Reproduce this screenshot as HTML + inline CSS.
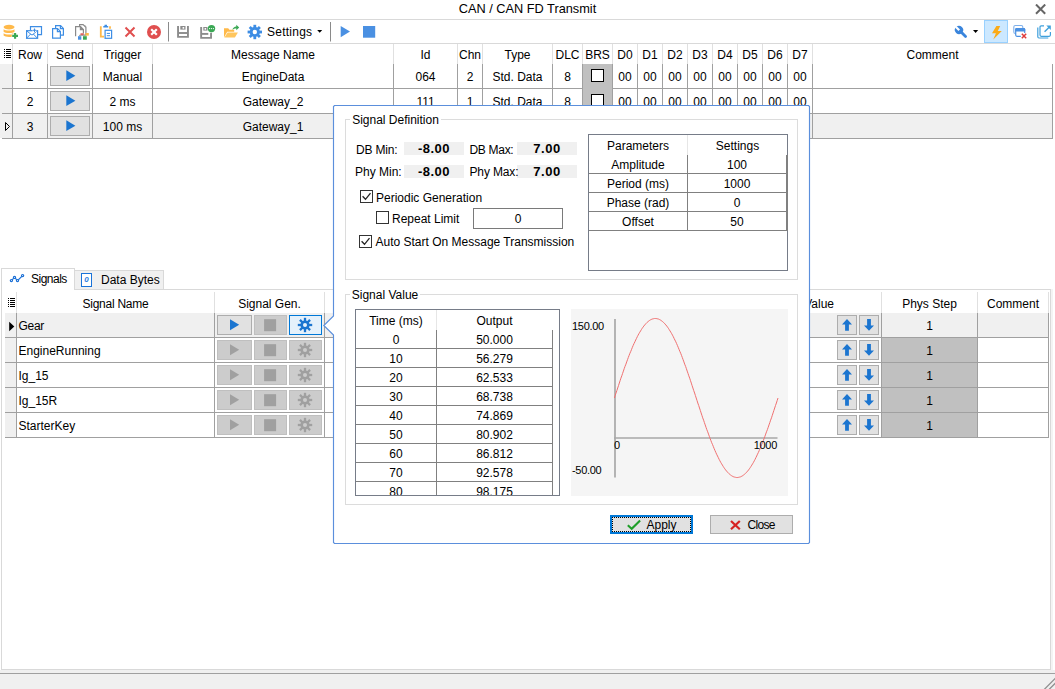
<!DOCTYPE html><html><head><meta charset="utf-8"><title>CAN / CAN FD Transmit</title><style>
html,body{margin:0;padding:0}
body{width:1055px;height:689px;position:relative;overflow:hidden;background:#fff;font-family:"Liberation Sans",sans-serif;font-size:12px;color:#000;line-height:1}
div,span,svg{position:absolute;box-sizing:border-box}
.t{white-space:nowrap;height:14px;line-height:14px}
.c{text-align:center}
.hl{background:#d9d9d9;height:1px}
.vl{background:#e0e0e0;width:1px}
.gl{background:#a0a0a0}
.btn{background:#e1e1e1;border:1px solid #adadad}
.btnd{background:#cccccc;border:1px solid #bfbfbf}
</style></head><body>
<div class="t c" style="left:0px;top:2px;width:1055px;font-size:12.75px">CAN / CAN FD Transmit</div>
<svg style="left:1035px;top:4px" width="11" height="11" viewBox="0 0 11 11"><path d="M1 .5L10.200 9.700M10.200 .5L1 9.700" stroke="#666" stroke-width="2" fill="none"/></svg>
<div style="left:0px;top:19px;width:1055px;height:1px;background:#d9d9d9"></div>
<div style="left:0px;top:43px;width:1055px;height:1px;background:#d9d9d9"></div>
<div class="" style="left:0px;top:670px;width:1055px;height:19px;background:#f0f0f0"></div>
<div style="left:0px;top:673px;width:1055px;height:1px;background:#a0a0a0"></div>
<svg style="left:1041px;top:675px" width="14" height="14" viewBox="1041 675 14 14"><path d="M1044.200 689.500L1055.500 678.200M1049 689.500L1055.500 683" stroke="#909090" stroke-width="1.300" fill="none"/></svg>
<div class="" style="left:1051px;top:289px;width:2px;height:381px;background:#f4f4f4"></div>
<div class="" style="left:0px;top:114px;width:1052px;height:24px;background:#f0f0f0"></div>
<div class="" style="left:0px;top:64px;width:12px;height:74px;background:#f0f0f0"></div>
<div style="left:12px;top:44px;width:1px;height:20px;background:#e0e0e0"></div>
<div class="t c" style="left:13px;top:48px;width:34px;">Row</div>
<div style="left:47px;top:44px;width:1px;height:20px;background:#e0e0e0"></div>
<div class="t c" style="left:48px;top:48px;width:44px;">Send</div>
<div style="left:92px;top:44px;width:1px;height:20px;background:#e0e0e0"></div>
<div class="t c" style="left:93px;top:48px;width:59px;">Trigger</div>
<div style="left:152px;top:44px;width:1px;height:20px;background:#e0e0e0"></div>
<div class="t c" style="left:153px;top:48px;width:240px;">Message Name</div>
<div style="left:393px;top:44px;width:1px;height:20px;background:#e0e0e0"></div>
<div class="t c" style="left:394px;top:48px;width:63px;">Id</div>
<div style="left:457px;top:44px;width:1px;height:20px;background:#e0e0e0"></div>
<div class="t c" style="left:458px;top:48px;width:24px;">Chn</div>
<div style="left:482px;top:44px;width:1px;height:20px;background:#e0e0e0"></div>
<div class="t c" style="left:483px;top:48px;width:69px;">Type</div>
<div style="left:552px;top:44px;width:1px;height:20px;background:#e0e0e0"></div>
<div class="t c" style="left:553px;top:48px;width:29px;">DLC</div>
<div style="left:582px;top:44px;width:1px;height:20px;background:#e0e0e0"></div>
<div class="t c" style="left:583px;top:48px;width:29px;">BRS</div>
<div style="left:612px;top:44px;width:1px;height:20px;background:#e0e0e0"></div>
<div class="t c" style="left:613px;top:48px;width:24px;">D0</div>
<div style="left:637px;top:44px;width:1px;height:20px;background:#e0e0e0"></div>
<div class="t c" style="left:638px;top:48px;width:24px;">D1</div>
<div style="left:662px;top:44px;width:1px;height:20px;background:#e0e0e0"></div>
<div class="t c" style="left:663px;top:48px;width:24px;">D2</div>
<div style="left:687px;top:44px;width:1px;height:20px;background:#e0e0e0"></div>
<div class="t c" style="left:688px;top:48px;width:24px;">D3</div>
<div style="left:712px;top:44px;width:1px;height:20px;background:#e0e0e0"></div>
<div class="t c" style="left:713px;top:48px;width:24px;">D4</div>
<div style="left:737px;top:44px;width:1px;height:20px;background:#e0e0e0"></div>
<div class="t c" style="left:738px;top:48px;width:24px;">D5</div>
<div style="left:762px;top:44px;width:1px;height:20px;background:#e0e0e0"></div>
<div class="t c" style="left:763px;top:48px;width:24px;">D6</div>
<div style="left:787px;top:44px;width:1px;height:20px;background:#e0e0e0"></div>
<div class="t c" style="left:788px;top:48px;width:24px;">D7</div>
<div style="left:812px;top:44px;width:1px;height:20px;background:#e0e0e0"></div>
<div class="t c" style="left:813px;top:48px;width:239px;">Comment</div>
<svg style="left:4px;top:49px" width="8" height="10" viewBox="0 0 8 10"><path d="M0 .5h1M2 .5h5M0 2.5h1M2 2.5h5M0 4.5h1M2 4.5h5M0 6.5h1M2 6.5h5M0 8.5h1M2 8.5h5" stroke="#000" stroke-width="1"/></svg>
<div class="t c" style="left:13px;top:70px;width:34px;">1</div>
<div class="btn" style="left:50px;top:66px;width:40px;height:20px;"></div>
<svg style="left:66px;top:70px" width="10" height="12" viewBox="0 0 10 12"><path d="M.300 .300L9.400 5.650L.300 11Z" fill="#1b75d0"/></svg>
<div class="t c" style="left:93px;top:70px;width:59px;">Manual</div>
<div class="t c" style="left:153px;top:70px;width:240px;">EngineData</div>
<div class="t c" style="left:394px;top:70px;width:63px;">064</div>
<div class="t c" style="left:458px;top:70px;width:24px;">2</div>
<div class="t c" style="left:483px;top:70px;width:69px;">Std. Data</div>
<div class="t c" style="left:553px;top:70px;width:29px;">8</div>
<div class="" style="left:582px;top:64px;width:31px;height:24px;background:#c0c0c0"></div>
<div class="" style="left:591px;top:69px;width:13px;height:13px;background:#fff;border:1px solid #000"></div>
<div class="t c" style="left:613px;top:70px;width:24px;">00</div>
<div class="t c" style="left:638px;top:70px;width:24px;">00</div>
<div class="t c" style="left:663px;top:70px;width:24px;">00</div>
<div class="t c" style="left:688px;top:70px;width:24px;">00</div>
<div class="t c" style="left:713px;top:70px;width:24px;">00</div>
<div class="t c" style="left:738px;top:70px;width:24px;">00</div>
<div class="t c" style="left:763px;top:70px;width:24px;">00</div>
<div class="t c" style="left:788px;top:70px;width:24px;">00</div>
<div style="left:2px;top:88px;width:1051px;height:1px;background:#a0a0a0"></div>
<div class="t c" style="left:13px;top:95px;width:34px;">2</div>
<div class="btn" style="left:50px;top:91px;width:40px;height:20px;"></div>
<svg style="left:66px;top:95px" width="10" height="12" viewBox="0 0 10 12"><path d="M.300 .300L9.400 5.650L.300 11Z" fill="#1b75d0"/></svg>
<div class="t c" style="left:93px;top:95px;width:59px;">2 ms</div>
<div class="t c" style="left:153px;top:95px;width:240px;">Gateway_2</div>
<div class="t c" style="left:394px;top:95px;width:63px;">111</div>
<div class="t c" style="left:458px;top:95px;width:24px;">1</div>
<div class="t c" style="left:483px;top:95px;width:69px;">Std. Data</div>
<div class="t c" style="left:553px;top:95px;width:29px;">8</div>
<div class="" style="left:582px;top:88px;width:31px;height:25px;background:#c0c0c0"></div>
<div class="" style="left:591px;top:94px;width:13px;height:13px;background:#fff;border:1px solid #000"></div>
<div class="t c" style="left:613px;top:95px;width:24px;">00</div>
<div class="t c" style="left:638px;top:95px;width:24px;">00</div>
<div class="t c" style="left:663px;top:95px;width:24px;">00</div>
<div class="t c" style="left:688px;top:95px;width:24px;">00</div>
<div class="t c" style="left:713px;top:95px;width:24px;">00</div>
<div class="t c" style="left:738px;top:95px;width:24px;">00</div>
<div class="t c" style="left:763px;top:95px;width:24px;">00</div>
<div class="t c" style="left:788px;top:95px;width:24px;">00</div>
<div style="left:2px;top:113px;width:1051px;height:1px;background:#a0a0a0"></div>
<div class="t c" style="left:13px;top:120px;width:34px;">3</div>
<div class="btn" style="left:50px;top:116px;width:40px;height:20px;"></div>
<svg style="left:66px;top:120px" width="10" height="12" viewBox="0 0 10 12"><path d="M.300 .300L9.400 5.650L.300 11Z" fill="#1b75d0"/></svg>
<div class="t c" style="left:93px;top:120px;width:59px;">100 ms</div>
<div class="t c" style="left:153px;top:120px;width:240px;">Gateway_1</div>
<div class="t c" style="left:394px;top:120px;width:63px;"></div>
<div class="t c" style="left:458px;top:120px;width:24px;"></div>
<div class="t c" style="left:483px;top:120px;width:69px;"></div>
<div class="t c" style="left:553px;top:120px;width:29px;"></div>
<div style="left:2px;top:138px;width:1051px;height:1px;background:#a0a0a0"></div>
<div style="left:12px;top:64px;width:1px;height:74px;background:#a0a0a0"></div>
<div style="left:47px;top:64px;width:1px;height:74px;background:#a0a0a0"></div>
<div style="left:92px;top:64px;width:1px;height:74px;background:#a0a0a0"></div>
<div style="left:152px;top:64px;width:1px;height:74px;background:#a0a0a0"></div>
<div style="left:393px;top:64px;width:1px;height:74px;background:#a0a0a0"></div>
<div style="left:457px;top:64px;width:1px;height:74px;background:#a0a0a0"></div>
<div style="left:482px;top:64px;width:1px;height:74px;background:#a0a0a0"></div>
<div style="left:552px;top:64px;width:1px;height:74px;background:#a0a0a0"></div>
<div style="left:582px;top:64px;width:1px;height:74px;background:#a0a0a0"></div>
<div style="left:612px;top:64px;width:1px;height:74px;background:#a0a0a0"></div>
<div style="left:637px;top:64px;width:1px;height:74px;background:#a0a0a0"></div>
<div style="left:662px;top:64px;width:1px;height:74px;background:#a0a0a0"></div>
<div style="left:687px;top:64px;width:1px;height:74px;background:#a0a0a0"></div>
<div style="left:712px;top:64px;width:1px;height:74px;background:#a0a0a0"></div>
<div style="left:737px;top:64px;width:1px;height:74px;background:#a0a0a0"></div>
<div style="left:762px;top:64px;width:1px;height:74px;background:#a0a0a0"></div>
<div style="left:787px;top:64px;width:1px;height:74px;background:#a0a0a0"></div>
<div style="left:812px;top:64px;width:1px;height:74px;background:#a0a0a0"></div>
<div style="left:1052px;top:64px;width:1px;height:74px;background:#a0a0a0"></div>
<svg style="left:5px;top:122px" width="6" height="9" viewBox="0 0 6 9"><path d="M.5 .5L4.5 4.5L.5 8.5Z" fill="none" stroke="#000" stroke-width="1"/></svg><svg style="left:0;top:0" width="400" height="44" viewBox="0 0 400 44"><g fill="#ffb949"><ellipse cx="9.050" cy="27.100" rx="5.450" ry="2.400"/><path d="M3.600 29.300c1.200 1.700 9.700 1.700 10.900 0v2.400c-1.200 1.800-9.700 1.800-10.900 0z"/><path d="M3.600 33.200c1.200 1.700 9.700 1.700 10.900 0v.2h-2.700v3.400c-3.200 .5-7.200 .1-8.200-1.200z"/></g><path d="M15.100 33v5.800M12.200 35.900h5.800" stroke="#3aa854" stroke-width="2.100" fill="none"/><g fill="none" stroke="#3d8de4" stroke-width="1.200"><path d="M30.500 30v-3.400h11v8h-3.500"/><rect x="26.600" y="30.700" width="11" height="7.600" fill="#fff"/><path d="M26.600 30.800l5.400 4.300l5.400-4.300M26.600 38.200l4.100-4.200M37.400 38.200l-4.100-4.200" stroke-width="1"/></g><rect x="32.600" y="28.300" width="3.800" height="3.800" fill="#fff"/><path d="M34.500 28.500v3.400M32.800 30.200h3.400" stroke="#3d8de4" stroke-width="1.100" fill="none"/><g fill="#fff" stroke="#3d8de4" stroke-width="1.200"><path d="M55.600 25.600h5l2.800 2.800v6.800h-7.800z"/><path d="M60.400 25.600v3h3" fill="none"/><path d="M52.600 28.600h5l2.800 2.800v6.800h-7.800z"/><path d="M57.400 28.600v3h3" fill="none"/></g><g fill="#fff" stroke="#8a8a8a" stroke-width="1.200"><path d="M79.600 24.600h3.500l2.800 2.800v7.800h-6.300z"/><path d="M75.600 36.200v-9.600h5l2.800 2.800v4" /><path d="M80.400 26.600v3h3" fill="none"/></g><path d="M83.300 24.400l2.900 2.900v-1.200z" fill="#8a8a8a"/><path d="M80.600 26.400l3 3h-3z" fill="#8a8a8a"/><rect x="80.500" y="33.300" width="3.200" height="1.600" fill="#e05858"/><rect x="85.400" y="33" width="3.400" height="2.600" fill="#ffb949"/><rect x="78" y="36.200" width="3.300" height="3.500" fill="#4a90e2"/><rect x="83" y="36.200" width="3.800" height="3.500" fill="#3aa854"/><path d="M100.800 26.200v10.500h3.200" stroke="#ffb949" stroke-width="1.800" fill="none"/><path d="M110 26.200v2.600" stroke="#ffb949" stroke-width="1.800" fill="none"/><path d="M103.300 27.400v-1.500h1.200v-1.100h2.500v1.100h1.200v1.500z" fill="#3d8de4"/><rect x="105.100" y="30.300" width="6.500" height="8" fill="#fff" stroke="#3d8de4" stroke-width="1.200"/><path d="M106.800 33.400h3.200M106.800 35.700h3.200" stroke="#3d8de4" stroke-width="1"/><path d="M125.500 27.500l9 9M134.500 27.500l-9 9" stroke="#e04f4f" stroke-width="2" fill="none"/><circle cx="154" cy="32" r="7" fill="#e04f4f"/><path d="M151.200 29.200l5.600 5.600M156.800 29.200l-5.600 5.600" stroke="#fff" stroke-width="2.200" fill="none"/><path d="M168.500 22v19.500" stroke="#8a8a8a" stroke-width="1"/><g fill="none" stroke="#8c8c8c" stroke-width="1.900"><path d="M178.050 26v10.850h9.900v-10.850"/><path d="M178.800 33h8.600"/></g><rect x="180.300" y="26" width="5.200" height="3.600" fill="#8c8c8c"/><rect x="182.600" y="27" width="1.600" height="1.700" fill="#fff"/><g fill="none" stroke="#8c8c8c" stroke-width="1.900"><path d="M201.150 27v10.850h9.900v-5"/><path d="M201.800 33.900h6.500"/></g><rect x="203.300" y="27" width="4.200" height="3.600" fill="#8c8c8c"/><rect x="204.600" y="28" width="1.500" height="1.700" fill="#fff"/><circle cx="211.500" cy="28.600" r="3.700" fill="#3aa854"/><circle cx="209.600" cy="28.600" r=".6" fill="#fff"/><circle cx="211.500" cy="28.600" r=".6" fill="#fff"/><circle cx="213.400" cy="28.600" r=".6" fill="#fff"/><path d="M224 37.500v-9.300h4.200l1.200 1.500h4.800v2h-7l-3.200 5.800z" fill="#ffb949"/><path d="M227.600 32.600h10.300l-3 4.900h-10.500z" fill="#ffc65e"/><path d="M232.300 29.800c.6-2.200 2.200-3.300 4-3.400v-1.600l2.900 2.700l-2.900 2.700v-1.700c-1.500 0-2.700 .4-4 1.300z" fill="#3aa854"/><g fill="#3d8de4"><circle cx="254.8" cy="32" r="5.1"/><rect x="253.40" y="24.80" width="2.80" height="7.20" transform="rotate(0.0 254.8 32)"/><rect x="253.40" y="24.80" width="2.80" height="7.20" transform="rotate(45.0 254.8 32)"/><rect x="253.40" y="24.80" width="2.80" height="7.20" transform="rotate(90.0 254.8 32)"/><rect x="253.40" y="24.80" width="2.80" height="7.20" transform="rotate(135.0 254.8 32)"/><rect x="253.40" y="24.80" width="2.80" height="7.20" transform="rotate(180.0 254.8 32)"/><rect x="253.40" y="24.80" width="2.80" height="7.20" transform="rotate(225.0 254.8 32)"/><rect x="253.40" y="24.80" width="2.80" height="7.20" transform="rotate(270.0 254.8 32)"/><rect x="253.40" y="24.80" width="2.80" height="7.20" transform="rotate(315.0 254.8 32)"/><circle cx="254.8" cy="32" r="2.2" fill="#fff"/></g><path d="M317.200 30h5l-2.500 2.800z" fill="#000"/><path d="M330.500 22v19.500" stroke="#8a8a8a" stroke-width="1"/><path d="M340.700 26v11.200l9.300-5.600z" fill="#4a90e2"/><rect x="363" y="26" width="12.200" height="11.700" fill="#4a90e2"/></svg>
<div class="t" style="left:267px;top:25px;width:50px;letter-spacing:.25px">Settings</div>
<div style="left:984px;top:20px;width:24px;height:23px;background:#cce8ff;border:1px solid #99d1ff"></div>
<svg style="left:945px;top:0" width="110" height="44" viewBox="945 0 110 44"><g transform="translate(959 30) rotate(-45)" fill="#3a85dc"><circle cx="0" cy="0" r="4.100"/><rect x="-1.400" y="2" width="2.800" height="8.600" rx="1.300"/><rect x="-1.100" y="-4.600" width="2.200" height="4.900" fill="#fff"/></g><path d="M973 30h5.200l-2.600 3.100z" fill="#000"/><path d="M996.400 26h3.800l-2.400 4.900h4l-8.500 8.700l2.600-6.400h-3.900z" fill="#fbab18"/><rect x="1013.800" y="25.500" width="9" height="8" rx="1.500" fill="none" stroke="#7fb0ea" stroke-width="1.100"/><rect x="1015.700" y="28.600" width="9" height="7.700" rx="1.200" fill="#fff" stroke="#4a90e2" stroke-width="1.200"/><path d="M1015.200 31.600v-2.300a1.200 1.200 0 0 1 1.200-1.200h7.600a1.200 1.200 0 0 1 1.200 1.200v2.300z" fill="#4a90e2"/><rect x="1020.800" y="33" width="6" height="6" fill="#fff"/><path d="M1021.800 33.800l4.400 4.400M1026.200 33.800l-4.400 4.400" stroke="#e03a3a" stroke-width="1.500" fill="none"/><g fill="none" stroke="#3fa0dc" stroke-width="1.200"><path d="M1044 25.900h-2.800a1.200 1.200 0 0 0-1.200 1.200v8a1.200 1.200 0 0 0 1.200 1.200h8a1.200 1.200 0 0 0 1.200-1.200v-3"/><path d="M1037.800 27.500v9.300a1.200 1.200 0 0 0 1.200 1.200h9.300"/><path d="M1044.600 31.700l4.800-4.800" stroke-width="1.400"/></g><path d="M1046.300 25.400h4.500v4.500z" fill="#3fa0dc"/></svg><div class="" style="left:1px;top:289px;width:1050px;height:381px;border:1px solid #d9d9d9;background:#fff"></div>
<div class="" style="left:74px;top:270px;width:90px;height:20px;border:1px solid #d9d9d9;background:#f0f0f0"></div>
<div class="" style="left:1px;top:268px;width:74px;height:22px;border:1px solid #d9d9d9;border-bottom:none;background:#fff"></div>
<svg style="left:8px;top:272px" width="18" height="12" viewBox="8 272 18 12"><g fill="#fff" stroke="#1a6fd6" stroke-width="1.200"><path d="M11.400 280.600l3.100-3.200l3 3.200l5.100-5" fill="none"/><circle cx="11.400" cy="280.600" r="1.100"/><circle cx="14.500" cy="277.400" r="1.100"/><circle cx="17.500" cy="280.600" r="1.100"/><circle cx="22.600" cy="275.600" r="1.100"/></g></svg>
<div class="t" style="left:31px;top:272px;width:40px;letter-spacing:-.5px">Signals</div>
<div class="" style="left:81px;top:273px;width:11px;height:14px;border:1px solid #1a73d9;background:#fff"></div>
<div class="t c" style="left:81px;top:273px;width:11px;font-size:8px;color:#2a7de0;font-weight:bold"><i>0</i></div>
<div class="t" style="left:101px;top:273px;width:64px;">Data Bytes</div>
<div class="" style="left:5px;top:313px;width:1044px;height:24px;background:#f0f0f0"></div>
<div class="" style="left:5px;top:313px;width:11px;height:124px;background:#f0f0f0"></div>
<div class="t c" style="left:17px;top:297px;width:197px;letter-spacing:-.25px">Signal Name</div>
<div class="t c" style="left:215px;top:297px;width:109px;">Signal Gen.</div>
<div class="t" style="left:774px;top:297px;width:60px;text-align:right">Phys Value</div>
<div class="t c" style="left:882px;top:297px;width:95px;">Phys Step</div>
<div class="t c" style="left:978px;top:297px;width:70px;">Comment</div>
<div style="left:16px;top:292px;width:1px;height:21px;background:#e0e0e0"></div>
<div style="left:214px;top:292px;width:1px;height:21px;background:#e0e0e0"></div>
<div style="left:324px;top:292px;width:1px;height:21px;background:#e0e0e0"></div>
<div style="left:881px;top:292px;width:1px;height:21px;background:#e0e0e0"></div>
<div style="left:977px;top:292px;width:1px;height:21px;background:#e0e0e0"></div>
<div style="left:1048px;top:292px;width:1px;height:21px;background:#e0e0e0"></div>
<svg style="left:8px;top:298px" width="8" height="10" viewBox="0 0 8 10"><path d="M0 .5h1M2 .5h5M0 2.500h1M2 2.500h5M0 4.500h1M2 4.500h5M0 6.500h1M2 6.500h5M0 8.500h1M2 8.500h5" stroke="#000" stroke-width="1"/></svg>
<div class="t" style="left:18.5px;top:319px;width:190px;letter-spacing:-.3px">Gear</div>
<div class="btn" style="left:217px;top:315px;width:35px;height:20px;"></div>
<div class="btnd" style="left:254px;top:315px;width:33px;height:20px;"></div>
<div class="" style="left:289px;top:315px;width:33px;height:20px;background:#e5f1fb;border:1px solid #0078d7"></div>
<svg style="left:217px;top:313px" width="106" height="24" viewBox="217 0 106 24"><path d="M230 6.300v11l9.200-5.500z" fill="#1b75d0"/><rect x="264.100" y="6.200" width="12" height="12" fill="#a0a0a0"/><g fill="#1b75d0"><circle cx="305" cy="12" r="4.6"/><rect x="303.85" y="4.80" width="2.30" height="7.20" transform="rotate(0.0 305 12)"/><rect x="303.85" y="4.80" width="2.30" height="7.20" transform="rotate(45.0 305 12)"/><rect x="303.85" y="4.80" width="2.30" height="7.20" transform="rotate(90.0 305 12)"/><rect x="303.85" y="4.80" width="2.30" height="7.20" transform="rotate(135.0 305 12)"/><rect x="303.85" y="4.80" width="2.30" height="7.20" transform="rotate(180.0 305 12)"/><rect x="303.85" y="4.80" width="2.30" height="7.20" transform="rotate(225.0 305 12)"/><rect x="303.85" y="4.80" width="2.30" height="7.20" transform="rotate(270.0 305 12)"/><rect x="303.85" y="4.80" width="2.30" height="7.20" transform="rotate(315.0 305 12)"/><circle cx="305" cy="12" r="2" fill="#e5f1fb"/></g></svg>
<div class="btn" style="left:837px;top:315px;width:20px;height:20px;"></div>
<div class="btn" style="left:859px;top:315px;width:20px;height:20px;"></div>
<svg style="left:837px;top:313px" width="42" height="24" viewBox="837 0 42 24"><path d="M847 6l5 5.400h-3.100v6.400h-3.800v-6.400h-3.100z" fill="#1b75d0"/><path d="M869 17.800l-5-5.400h3.100v-6.400h3.800v6.400h3.100z" fill="#1b75d0"/></svg>
<div class="t c" style="left:882px;top:319px;width:95px;">1</div>
<div style="left:5px;top:337px;width:1044px;height:1px;background:#a0a0a0"></div>
<div class="t" style="left:18.5px;top:344px;width:190px;">EngineRunning</div>
<div class="btnd" style="left:217px;top:340px;width:35px;height:20px;"></div>
<div class="btnd" style="left:254px;top:340px;width:33px;height:20px;"></div>
<div class="btnd" style="left:289px;top:340px;width:33px;height:20px;"></div>
<svg style="left:217px;top:338px" width="106" height="24" viewBox="217 0 106 24"><path d="M230 6.300v11l9.200-5.500z" fill="#a0a0a0"/><rect x="264.100" y="6.200" width="12" height="12" fill="#a0a0a0"/><g fill="#a0a0a0"><circle cx="305" cy="12" r="4.6"/><rect x="303.85" y="4.80" width="2.30" height="7.20" transform="rotate(0.0 305 12)"/><rect x="303.85" y="4.80" width="2.30" height="7.20" transform="rotate(45.0 305 12)"/><rect x="303.85" y="4.80" width="2.30" height="7.20" transform="rotate(90.0 305 12)"/><rect x="303.85" y="4.80" width="2.30" height="7.20" transform="rotate(135.0 305 12)"/><rect x="303.85" y="4.80" width="2.30" height="7.20" transform="rotate(180.0 305 12)"/><rect x="303.85" y="4.80" width="2.30" height="7.20" transform="rotate(225.0 305 12)"/><rect x="303.85" y="4.80" width="2.30" height="7.20" transform="rotate(270.0 305 12)"/><rect x="303.85" y="4.80" width="2.30" height="7.20" transform="rotate(315.0 305 12)"/><circle cx="305" cy="12" r="2" fill="#cccccc"/></g></svg>
<div class="btn" style="left:837px;top:340px;width:20px;height:20px;"></div>
<div class="btn" style="left:859px;top:340px;width:20px;height:20px;"></div>
<svg style="left:837px;top:338px" width="42" height="24" viewBox="837 0 42 24"><path d="M847 6l5 5.400h-3.100v6.400h-3.800v-6.400h-3.100z" fill="#1b75d0"/><path d="M869 17.800l-5-5.400h3.100v-6.400h3.800v6.400h3.100z" fill="#1b75d0"/></svg>
<div class="" style="left:882px;top:338px;width:95px;height:24px;background:#c0c0c0"></div>
<div class="t c" style="left:882px;top:344px;width:95px;">1</div>
<div style="left:5px;top:362px;width:1044px;height:1px;background:#a0a0a0"></div>
<div class="t" style="left:18.5px;top:369px;width:190px;">Ig_15</div>
<div class="btnd" style="left:217px;top:365px;width:35px;height:20px;"></div>
<div class="btnd" style="left:254px;top:365px;width:33px;height:20px;"></div>
<div class="btnd" style="left:289px;top:365px;width:33px;height:20px;"></div>
<svg style="left:217px;top:363px" width="106" height="24" viewBox="217 0 106 24"><path d="M230 6.300v11l9.200-5.500z" fill="#a0a0a0"/><rect x="264.100" y="6.200" width="12" height="12" fill="#a0a0a0"/><g fill="#a0a0a0"><circle cx="305" cy="12" r="4.6"/><rect x="303.85" y="4.80" width="2.30" height="7.20" transform="rotate(0.0 305 12)"/><rect x="303.85" y="4.80" width="2.30" height="7.20" transform="rotate(45.0 305 12)"/><rect x="303.85" y="4.80" width="2.30" height="7.20" transform="rotate(90.0 305 12)"/><rect x="303.85" y="4.80" width="2.30" height="7.20" transform="rotate(135.0 305 12)"/><rect x="303.85" y="4.80" width="2.30" height="7.20" transform="rotate(180.0 305 12)"/><rect x="303.85" y="4.80" width="2.30" height="7.20" transform="rotate(225.0 305 12)"/><rect x="303.85" y="4.80" width="2.30" height="7.20" transform="rotate(270.0 305 12)"/><rect x="303.85" y="4.80" width="2.30" height="7.20" transform="rotate(315.0 305 12)"/><circle cx="305" cy="12" r="2" fill="#cccccc"/></g></svg>
<div class="btn" style="left:837px;top:365px;width:20px;height:20px;"></div>
<div class="btn" style="left:859px;top:365px;width:20px;height:20px;"></div>
<svg style="left:837px;top:363px" width="42" height="24" viewBox="837 0 42 24"><path d="M847 6l5 5.400h-3.100v6.400h-3.800v-6.400h-3.100z" fill="#1b75d0"/><path d="M869 17.800l-5-5.400h3.100v-6.400h3.800v6.400h3.100z" fill="#1b75d0"/></svg>
<div class="" style="left:882px;top:363px;width:95px;height:24px;background:#c0c0c0"></div>
<div class="t c" style="left:882px;top:369px;width:95px;">1</div>
<div style="left:5px;top:387px;width:1044px;height:1px;background:#a0a0a0"></div>
<div class="t" style="left:18.5px;top:394px;width:190px;">Ig_15R</div>
<div class="btnd" style="left:217px;top:390px;width:35px;height:20px;"></div>
<div class="btnd" style="left:254px;top:390px;width:33px;height:20px;"></div>
<div class="btnd" style="left:289px;top:390px;width:33px;height:20px;"></div>
<svg style="left:217px;top:388px" width="106" height="24" viewBox="217 0 106 24"><path d="M230 6.300v11l9.200-5.500z" fill="#a0a0a0"/><rect x="264.100" y="6.200" width="12" height="12" fill="#a0a0a0"/><g fill="#a0a0a0"><circle cx="305" cy="12" r="4.6"/><rect x="303.85" y="4.80" width="2.30" height="7.20" transform="rotate(0.0 305 12)"/><rect x="303.85" y="4.80" width="2.30" height="7.20" transform="rotate(45.0 305 12)"/><rect x="303.85" y="4.80" width="2.30" height="7.20" transform="rotate(90.0 305 12)"/><rect x="303.85" y="4.80" width="2.30" height="7.20" transform="rotate(135.0 305 12)"/><rect x="303.85" y="4.80" width="2.30" height="7.20" transform="rotate(180.0 305 12)"/><rect x="303.85" y="4.80" width="2.30" height="7.20" transform="rotate(225.0 305 12)"/><rect x="303.85" y="4.80" width="2.30" height="7.20" transform="rotate(270.0 305 12)"/><rect x="303.85" y="4.80" width="2.30" height="7.20" transform="rotate(315.0 305 12)"/><circle cx="305" cy="12" r="2" fill="#cccccc"/></g></svg>
<div class="btn" style="left:837px;top:390px;width:20px;height:20px;"></div>
<div class="btn" style="left:859px;top:390px;width:20px;height:20px;"></div>
<svg style="left:837px;top:388px" width="42" height="24" viewBox="837 0 42 24"><path d="M847 6l5 5.400h-3.100v6.400h-3.800v-6.400h-3.100z" fill="#1b75d0"/><path d="M869 17.800l-5-5.400h3.100v-6.400h3.800v6.400h3.100z" fill="#1b75d0"/></svg>
<div class="" style="left:882px;top:388px;width:95px;height:24px;background:#c0c0c0"></div>
<div class="t c" style="left:882px;top:394px;width:95px;">1</div>
<div style="left:5px;top:412px;width:1044px;height:1px;background:#a0a0a0"></div>
<div class="t" style="left:18.5px;top:419px;width:190px;">StarterKey</div>
<div class="btnd" style="left:217px;top:415px;width:35px;height:20px;"></div>
<div class="btnd" style="left:254px;top:415px;width:33px;height:20px;"></div>
<div class="btnd" style="left:289px;top:415px;width:33px;height:20px;"></div>
<svg style="left:217px;top:413px" width="106" height="24" viewBox="217 0 106 24"><path d="M230 6.300v11l9.200-5.500z" fill="#a0a0a0"/><rect x="264.100" y="6.200" width="12" height="12" fill="#a0a0a0"/><g fill="#a0a0a0"><circle cx="305" cy="12" r="4.6"/><rect x="303.85" y="4.80" width="2.30" height="7.20" transform="rotate(0.0 305 12)"/><rect x="303.85" y="4.80" width="2.30" height="7.20" transform="rotate(45.0 305 12)"/><rect x="303.85" y="4.80" width="2.30" height="7.20" transform="rotate(90.0 305 12)"/><rect x="303.85" y="4.80" width="2.30" height="7.20" transform="rotate(135.0 305 12)"/><rect x="303.85" y="4.80" width="2.30" height="7.20" transform="rotate(180.0 305 12)"/><rect x="303.85" y="4.80" width="2.30" height="7.20" transform="rotate(225.0 305 12)"/><rect x="303.85" y="4.80" width="2.30" height="7.20" transform="rotate(270.0 305 12)"/><rect x="303.85" y="4.80" width="2.30" height="7.20" transform="rotate(315.0 305 12)"/><circle cx="305" cy="12" r="2" fill="#cccccc"/></g></svg>
<div class="btn" style="left:837px;top:415px;width:20px;height:20px;"></div>
<div class="btn" style="left:859px;top:415px;width:20px;height:20px;"></div>
<svg style="left:837px;top:413px" width="42" height="24" viewBox="837 0 42 24"><path d="M847 6l5 5.400h-3.100v6.400h-3.800v-6.400h-3.100z" fill="#1b75d0"/><path d="M869 17.800l-5-5.400h3.100v-6.400h3.800v6.400h3.100z" fill="#1b75d0"/></svg>
<div class="" style="left:882px;top:413px;width:95px;height:24px;background:#c0c0c0"></div>
<div class="t c" style="left:882px;top:419px;width:95px;">1</div>
<div style="left:5px;top:437px;width:1044px;height:1px;background:#a0a0a0"></div>
<div style="left:16px;top:313px;width:1px;height:125px;background:#a0a0a0"></div>
<div style="left:214px;top:313px;width:1px;height:125px;background:#a0a0a0"></div>
<div style="left:324px;top:313px;width:1px;height:125px;background:#a0a0a0"></div>
<div style="left:881px;top:313px;width:1px;height:125px;background:#a0a0a0"></div>
<div style="left:977px;top:313px;width:1px;height:125px;background:#a0a0a0"></div>
<div style="left:1048px;top:313px;width:1px;height:125px;background:#a0a0a0"></div>
<svg style="left:9px;top:321px" width="6" height="11" viewBox="0 0 6 11"><path d="M.200 .700L5.300 5.500L.200 10.300Z" fill="#000"/></svg><svg style="left:320px;top:100px" width="495" height="450" viewBox="320 100 495 450"><path d="M334.500 105.500H808.500L809.500 106.500V542.500L808.500 543.500H334.500L333.500 542.500V335L323.800 325.500L333.500 316V106.500Z" fill="#fff" stroke="#5b8fdc" stroke-width="1.150"/></svg>
<div class="" style="left:345px;top:119px;width:453px;height:161px;border:1px solid #dcdcdc"></div>
<div class="t c" style="left:350px;top:113px;width:91px;background:#fff">Signal Definition</div>
<div class="" style="left:345px;top:294px;width:453px;height:211px;border:1px solid #dcdcdc"></div>
<div class="t c" style="left:350px;top:288px;width:70px;background:#fff">Signal Value</div>
<div class="" style="left:404px;top:142px;width:60px;height:13px;background:#f0f0f0"></div>
<div class="t c" style="left:404px;top:141px;width:60px;font-weight:bold;font-size:13px;letter-spacing:.5px;height:15px;line-height:15px">-8.00</div>
<div class="" style="left:517px;top:142px;width:60px;height:13px;background:#f0f0f0"></div>
<div class="t c" style="left:517px;top:141px;width:60px;font-weight:bold;font-size:13px;letter-spacing:.5px;height:15px;line-height:15px">7.00</div>
<div class="" style="left:404px;top:165px;width:60px;height:13px;background:#f0f0f0"></div>
<div class="t c" style="left:404px;top:164px;width:60px;font-weight:bold;font-size:13px;letter-spacing:.5px;height:15px;line-height:15px">-8.00</div>
<div class="" style="left:517px;top:165px;width:60px;height:13px;background:#f0f0f0"></div>
<div class="t c" style="left:517px;top:164px;width:60px;font-weight:bold;font-size:13px;letter-spacing:.5px;height:15px;line-height:15px">7.00</div>
<div class="t" style="left:356px;top:143px;width:45px;letter-spacing:-.2px">DB Min:</div>
<div class="t" style="left:355px;top:165px;width:50px;">Phy Min:</div>
<div class="t" style="left:469.5px;top:143px;width:48px;letter-spacing:-.3px">DB Max:</div>
<div class="t" style="left:469.5px;top:165px;width:56px;letter-spacing:-.15px">Phy Max:</div>
<div class="" style="left:360px;top:190px;width:13px;height:13px;border:1px solid #333;background:#fff"></div>
<svg style="left:360px;top:190px" width="13" height="13" viewBox="0 0 13 13"><path d="M2.600 6.300l2.900 3l5-6.100" stroke="#222" stroke-width="1.300" fill="none"/></svg>
<div class="t" style="left:376px;top:191px;width:120px;">Periodic Generation</div>
<div class="" style="left:376px;top:211px;width:13px;height:13px;border:1px solid #333;background:#fff"></div>
<div class="t" style="left:392px;top:212px;width:80px;">Repeat Limit</div>
<div class="" style="left:473px;top:208px;width:90px;height:21px;border:1px solid #7a7a7a;background:#fff"></div>
<div class="t c" style="left:473px;top:212px;width:90px;">0</div>
<div class="" style="left:359px;top:235px;width:13px;height:13px;border:1px solid #333;background:#fff"></div>
<svg style="left:359px;top:235px" width="13" height="13" viewBox="0 0 13 13"><path d="M2.600 6.300l2.900 3l5-6.100" stroke="#222" stroke-width="1.300" fill="none"/></svg>
<div class="t" style="left:375.5px;top:235px;width:210px;">Auto Start On Message Transmission</div>
<div class="" style="left:588px;top:134px;width:200px;height:137px;border:1px solid #767c88;background:#fff"></div>
<div class="t c" style="left:589px;top:139px;width:98px;">Parameters</div>
<div class="t c" style="left:688px;top:139px;width:99px;">Settings</div>
<div style="left:687px;top:135px;width:1px;height:20px;background:#e6e6e6"></div>
<div class="t c" style="left:589px;top:158px;width:98px;">Amplitude</div>
<div class="t c" style="left:688px;top:158px;width:98px;">100</div>
<div style="left:589px;top:173px;width:198px;height:1px;background:#808080"></div>
<div class="t c" style="left:589px;top:177px;width:98px;">Period (ms)</div>
<div class="t c" style="left:688px;top:177px;width:98px;">1000</div>
<div style="left:589px;top:192px;width:198px;height:1px;background:#808080"></div>
<div class="t c" style="left:589px;top:196px;width:98px;">Phase (rad)</div>
<div class="t c" style="left:688px;top:196px;width:98px;">0</div>
<div style="left:589px;top:211px;width:198px;height:1px;background:#808080"></div>
<div class="t c" style="left:589px;top:215px;width:98px;">Offset</div>
<div class="t c" style="left:688px;top:215px;width:98px;">50</div>
<div style="left:589px;top:230px;width:198px;height:1px;background:#808080"></div>
<div style="left:687px;top:155px;width:1px;height:76px;background:#808080"></div>
<div class="" style="left:786px;top:155px;width:2px;height:76px;background:#808080"></div>
<div class="" style="left:355px;top:309px;width:205px;height:187px;border:1px solid #767c88;background:#fff;overflow:hidden"></div>
<div class="t c" style="left:356px;top:314px;width:80px;">Time (ms)</div>
<div class="t c" style="left:437px;top:314px;width:115px;">Output</div>
<div style="left:436px;top:310px;width:1px;height:20px;background:#e6e6e6"></div>
<div class="t c" style="left:356px;top:333px;width:80px;">0</div>
<div class="t c" style="left:437px;top:333px;width:115px;">50.000</div>
<div style="left:356px;top:348px;width:197px;height:1px;background:#808080"></div>
<div class="t c" style="left:356px;top:352px;width:80px;">10</div>
<div class="t c" style="left:437px;top:352px;width:115px;">56.279</div>
<div style="left:356px;top:367px;width:197px;height:1px;background:#808080"></div>
<div class="t c" style="left:356px;top:371px;width:80px;">20</div>
<div class="t c" style="left:437px;top:371px;width:115px;">62.533</div>
<div style="left:356px;top:386px;width:197px;height:1px;background:#808080"></div>
<div class="t c" style="left:356px;top:390px;width:80px;">30</div>
<div class="t c" style="left:437px;top:390px;width:115px;">68.738</div>
<div style="left:356px;top:405px;width:197px;height:1px;background:#808080"></div>
<div class="t c" style="left:356px;top:409px;width:80px;">40</div>
<div class="t c" style="left:437px;top:409px;width:115px;">74.869</div>
<div style="left:356px;top:424px;width:197px;height:1px;background:#808080"></div>
<div class="t c" style="left:356px;top:428px;width:80px;">50</div>
<div class="t c" style="left:437px;top:428px;width:115px;">80.902</div>
<div style="left:356px;top:443px;width:197px;height:1px;background:#808080"></div>
<div class="t c" style="left:356px;top:447px;width:80px;">60</div>
<div class="t c" style="left:437px;top:447px;width:115px;">86.812</div>
<div style="left:356px;top:462px;width:197px;height:1px;background:#808080"></div>
<div class="t c" style="left:356px;top:466px;width:80px;">70</div>
<div class="t c" style="left:437px;top:466px;width:115px;">92.578</div>
<div style="left:356px;top:481px;width:197px;height:1px;background:#808080"></div>
<div class="t c" style="left:356px;top:485px;width:80px;height:10px;overflow:hidden;">80</div>
<div class="t c" style="left:437px;top:485px;width:115px;height:10px;overflow:hidden;">98.175</div>
<div style="left:436px;top:330px;width:1px;height:165px;background:#808080"></div>
<div style="left:552px;top:330px;width:1px;height:165px;background:#808080"></div>
<div class="" style="left:571px;top:309px;width:217px;height:187px;background:#f5f5f5"></div>
<svg style="left:571px;top:309px" width="217" height="187" viewBox="571 309 217 187"><path d="M615 319v158.500M614 438h163.500" stroke="#a8a8a8" stroke-width="1.700" fill="none"/><path d="M614.4 398.0L615.2 395.5L616.0 393.0L616.9 390.5L617.7 388.0L618.5 385.6L619.3 383.1L620.1 380.7L620.9 378.2L621.8 375.8L622.6 373.4L623.4 371.1L624.2 368.7L625.0 366.4L625.9 364.2L626.7 361.9L627.5 359.7L628.3 357.5L629.1 355.4L629.9 353.3L630.8 351.3L631.6 349.3L632.4 347.3L633.2 345.4L634.0 343.6L634.9 341.8L635.7 340.0L636.5 338.4L637.3 336.7L638.1 335.2L638.9 333.7L639.8 332.2L640.6 330.9L641.4 329.6L642.2 328.3L643.0 327.2L643.8 326.1L644.7 325.0L645.5 324.1L646.3 323.2L647.1 322.4L647.9 321.7L648.8 321.0L649.6 320.4L650.4 319.9L651.2 319.5L652.0 319.1L652.8 318.9L653.7 318.7L654.5 318.5L655.3 318.5L656.1 318.5L656.9 318.7L657.8 318.9L658.6 319.1L659.4 319.5L660.2 319.9L661.0 320.4L661.8 321.0L662.7 321.7L663.5 322.4L664.3 323.2L665.1 324.1L665.9 325.0L666.8 326.1L667.6 327.2L668.4 328.3L669.2 329.6L670.0 330.9L670.8 332.2L671.7 333.7L672.5 335.2L673.3 336.7L674.1 338.4L674.9 340.0L675.8 341.8L676.6 343.6L677.4 345.4L678.2 347.3L679.0 349.3L679.8 351.3L680.7 353.3L681.5 355.4L682.3 357.5L683.1 359.7L683.9 361.9L684.7 364.2L685.6 366.4L686.4 368.7L687.2 371.1L688.0 373.4L688.8 375.8L689.7 378.2L690.5 380.7L691.3 383.1L692.1 385.6L692.9 388.0L693.7 390.5L694.6 393.0L695.4 395.5L696.2 398.0L697.0 400.5L697.8 403.0L698.7 405.5L699.5 408.0L700.3 410.4L701.1 412.9L701.9 415.3L702.7 417.8L703.6 420.2L704.4 422.6L705.2 424.9L706.0 427.3L706.8 429.6L707.7 431.8L708.5 434.1L709.3 436.3L710.1 438.5L710.9 440.6L711.7 442.7L712.6 444.7L713.4 446.7L714.2 448.7L715.0 450.6L715.8 452.4L716.6 454.2L717.5 456.0L718.3 457.6L719.1 459.3L719.9 460.8L720.7 462.3L721.6 463.8L722.4 465.1L723.2 466.4L724.0 467.7L724.8 468.8L725.6 469.9L726.5 471.0L727.3 471.9L728.1 472.8L728.9 473.6L729.7 474.3L730.6 475.0L731.4 475.6L732.2 476.1L733.0 476.5L733.8 476.9L734.6 477.1L735.5 477.3L736.3 477.5L737.1 477.5L737.9 477.5L738.7 477.3L739.6 477.1L740.4 476.9L741.2 476.5L742.0 476.1L742.8 475.6L743.6 475.0L744.5 474.3L745.3 473.6L746.1 472.8L746.9 471.9L747.7 471.0L748.6 469.9L749.4 468.8L750.2 467.7L751.0 466.4L751.8 465.1L752.6 463.8L753.5 462.3L754.3 460.8L755.1 459.3L755.9 457.6L756.7 456.0L757.5 454.2L758.4 452.4L759.2 450.6L760.0 448.7L760.8 446.7L761.6 444.7L762.5 442.7L763.3 440.6L764.1 438.5L764.9 436.3L765.7 434.1L766.5 431.8L767.4 429.6L768.2 427.3L769.0 424.9L769.8 422.6L770.6 420.2L771.5 417.8L772.3 415.3L773.1 412.9L773.9 410.4L774.7 408.0L775.5 405.5L776.4 403.0L777.2 400.5L778.0 398.0" stroke="#f07070" stroke-width="1" fill="none"/></svg>
<div class="t" style="left:572px;top:320px;width:33px;font-size:11px;letter-spacing:-.3px;height:12px;line-height:12px">150.00</div>
<div class="t" style="left:572px;top:464px;width:33px;font-size:11px;letter-spacing:-.3px;height:12px;line-height:12px">-50.00</div>
<div class="t" style="left:614px;top:439px;width:10px;font-size:11px;letter-spacing:-.3px;height:12px;line-height:12px">0</div>
<div class="t" style="left:746px;top:439px;width:31px;font-size:11px;letter-spacing:-.3px;height:12px;line-height:12px;text-align:right">1000</div>
<div class="" style="left:610px;top:515px;width:83px;height:19px;background:#e1e1e1;border:2px solid #0078d7"></div>
<div class="" style="left:612px;top:517px;width:79px;height:15px;border:1px dotted #000"></div>
<svg style="left:625px;top:518px" width="18" height="14" viewBox="625 518 18 14"><path d="M627.800 525.300l3.900 3.400l8.400-8.200" stroke="#1e9e28" stroke-width="2.100" fill="none"/></svg>
<div class="t" style="left:646.5px;top:518px;width:34px;">Apply</div>
<div class="btn" style="left:710px;top:515px;width:83px;height:19px;"></div>
<svg style="left:729px;top:519px" width="13" height="12" viewBox="729 519 13 12"><path d="M731 521l8.800 8.300M739.800 521l-8.800 8.300" stroke="#d62222" stroke-width="2.200" fill="none"/></svg>
<div class="t" style="left:747.5px;top:518px;width:34px;letter-spacing:-.7px">Close</div></body></html>
